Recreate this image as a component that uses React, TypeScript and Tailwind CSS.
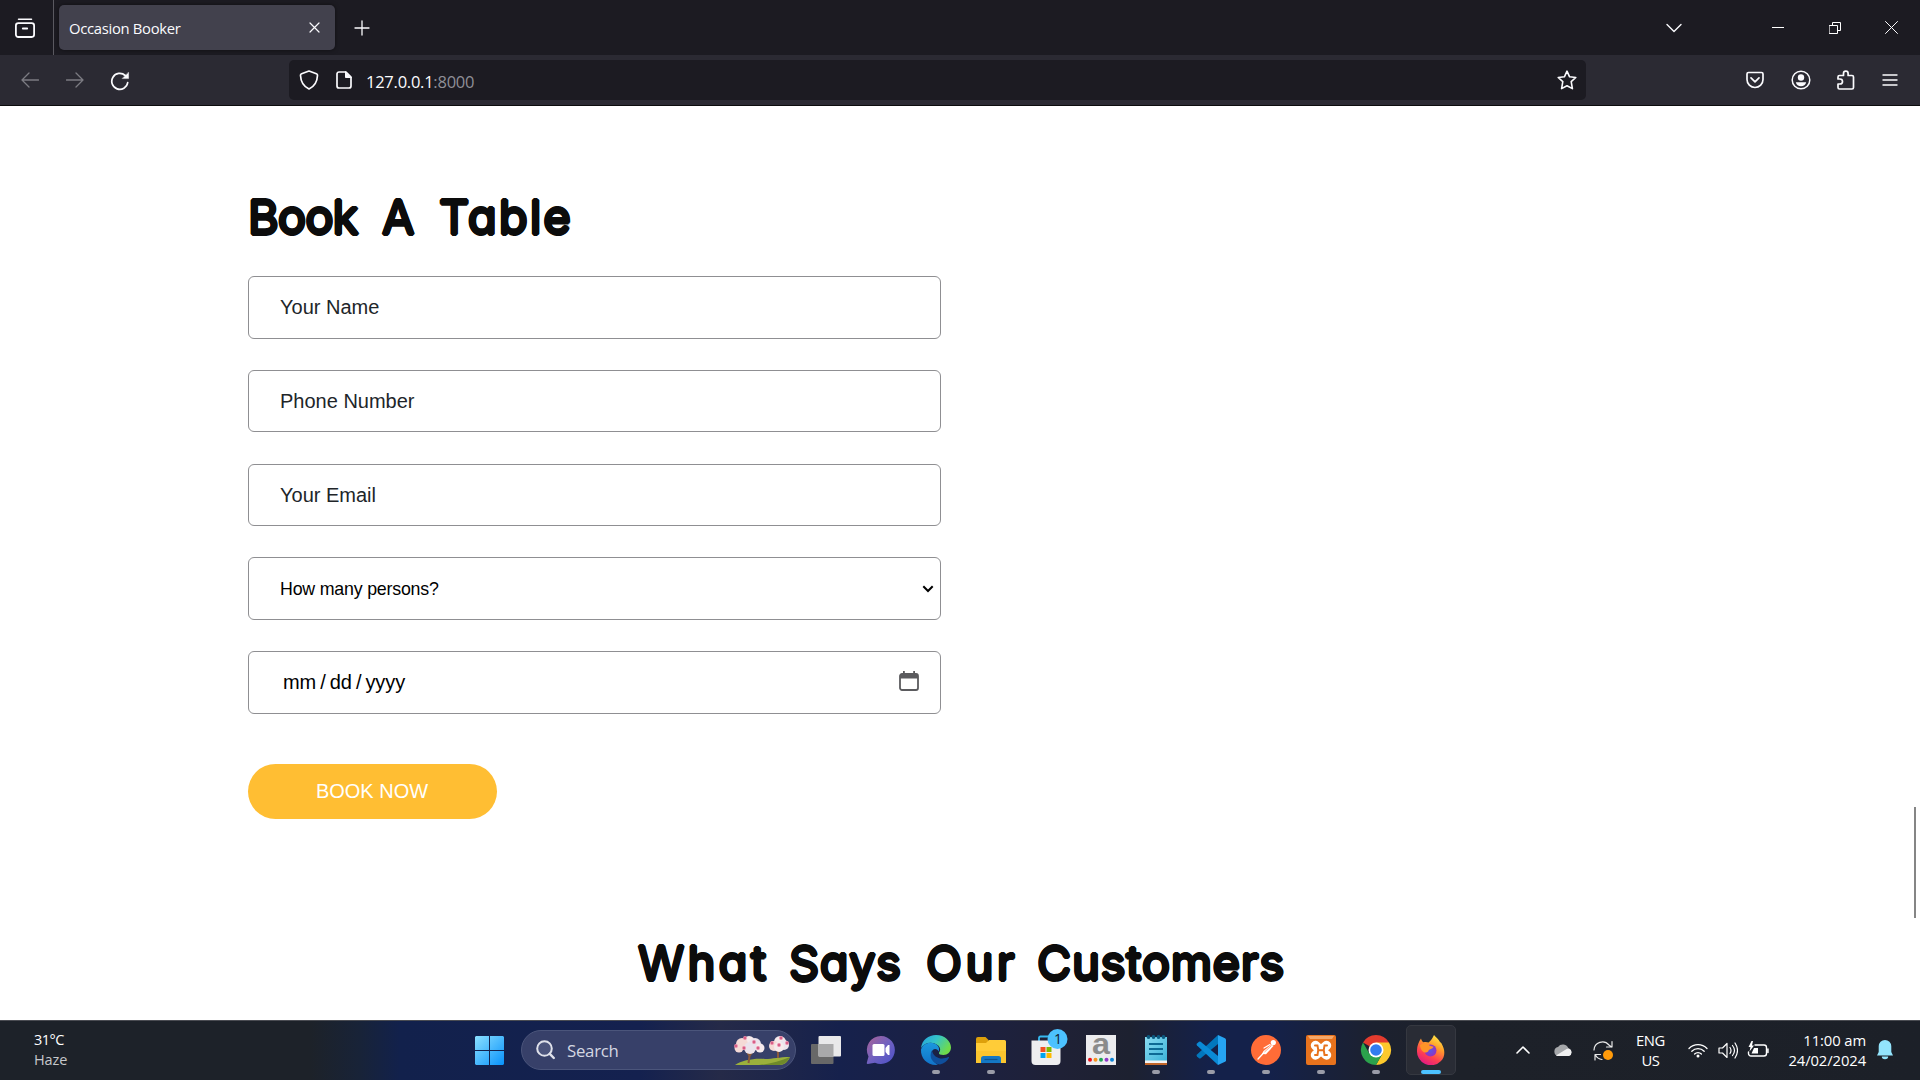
import type { ReactNode } from "react";

const UI = "font-['Open_Sans','Noto_Sans',sans-serif]";

function Icon({ w = 20, h = 20, vb, className = "", children }: { w?: number; h?: number; vb?: string; className?: string; children: ReactNode }) {
  return (
    <svg width={w} height={h} viewBox={vb ?? `0 0 ${w} ${h}`} className={`block shrink-0 ${className}`} fill="none" stroke="#fbfbfe" strokeWidth="1.5" strokeLinecap="round" strokeLinejoin="round">
      {children}
    </svg>
  );
}

function TabStrip() {
  return (
    <div className="flex h-[55px] items-center bg-[#1c1b22]">
      <div className="flex h-full w-[54px] items-center border-r border-[#5a5960] pl-[15px]">
        <Icon w={20} h={20}>
          <path d="M3.5 1.2h13" />
          <rect x="0.9" y="5.2" width="18.2" height="13.8" rx="2.4" strokeWidth="1.8" />
          <path d="M7.8 10.5h4.4" strokeWidth="1.8" />
        </Icon>
      </div>
      <div className="ml-[5px] flex h-[45px] w-[276px] items-center justify-between rounded-[5px] bg-[#42414d] pr-[15px] pl-[10px] shadow-[0_0_4px_rgba(0,0,0,0.5)]">
        <span className="pt-[2px] text-[14.8px] tracking-[-0.3px] text-[#fbfbfe]">Occasion Booker</span>
        <Icon w={11} h={11}><path d="M1 1l9 9M10 1l-9 9" strokeWidth="1.2" /></Icon>
      </div>
      <Icon w={16} h={16} className="ml-[18.5px]"><path d="M8 1v14M1 8h14" strokeWidth="1.3" /></Icon>
      <div className="flex-1" />
      <Icon w={16} h={10} className="mr-[90px]"><path d="M1 1.5l7 7 7-7" strokeWidth="1.4" /></Icon>
      <Icon w={12} h={12} className="mr-[45px]"><path d="M0 5.5h12" stroke="#fff" strokeWidth="1" strokeLinecap="butt" /></Icon>
      <Icon w={12} h={12} className="mr-[44px]"><path d="M.5 3.5h8v8h-8zM3.5 3.5v-3h8v8h-3" stroke="#fff" strokeWidth="1" strokeLinejoin="miter" /></Icon>
      <Icon w={13} h={13} className="mr-[22px]"><path d="M.5.5l12 12M12.5.5l-12 12" strokeWidth="1" /></Icon>
    </div>
  );
}

function Toolbar() {
  return (
    <div className="flex h-[51px] items-center border-b border-[#0c0c0d] bg-[#2b2a33]">
      <Icon w={18} h={16} className="ml-[21px]"><path d="M17.5 8H1M8 1L1 8l7 7" stroke="#7c7b82" strokeWidth="1.3" /></Icon>
      <Icon w={18} h={16} className="ml-[27px]"><path d="M.5 8H17M10 1l7 7-7 7" stroke="#7c7b82" strokeWidth="1.3" /></Icon>
      <Icon w={20} h={20} className="mt-px ml-[26px]">
        <path d="M17.7 11.5a8 8 0 1 1-2.500-7" strokeWidth="1.7" />
        <path d="M18.6 1.4v6.2h-6.2z" fill="#fbfbfe" strokeWidth="0.4" />
      </Icon>
      <div className="ml-[159px] flex h-10 w-[1297px] items-center rounded-[5px] bg-[#1c1b22] pr-[9px] pl-[10px]">
        <Icon w={20} h={20}><path d="M10 1l7.4 2.8c.9.4 1.2.8 1.1 1.7-.3 6.4-3.2 11-8.500 13.500C4.700 16.500 1.800 11.900 1.500 5.500c-.1-.9.200-1.300 1.100-1.700z" strokeWidth="1.7" /></Icon>
        <Icon w={16} h={18} className="ml-[17px]">
          <path d="M3 1h7l5 5v9a2 2 0 0 1-2 2H3a2 2 0 0 1-2-2V3a2 2 0 0 1 2-2z" strokeWidth="1.7" />
          <path d="M9.500 1v5.500H15z" fill="#fbfbfe" strokeWidth="1" />
        </Icon>
        <span className="ml-[14px] pt-[5px] text-[16.5px] tracking-[-0.25px] text-[#fbfbfe]">127.0.0.1<span className="text-[#8f8f97]">:8000</span></span>
        <div className="flex-1" />
        <Icon w={20} h={20}><path d="M10 1.200l2.600 5.600 6.200.7-4.600 4.200 1.200 6.900L10 15.700l-5.400 2.900 1.200-6.900L1.200 7.500l6.200-.7z" strokeWidth="1.6" /></Icon>
      </div>
      <div className="flex-1" />
      <Icon w={18} h={18} className="mr-[27px]"><path d="M2.500 1.500h13A1.500 1.500 0 0 1 17 3v5.500a8 8 0 0 1-16 0V3a1.500 1.500 0 0 1 1.500-1.500zM5 6.800l4 4 4-4" strokeWidth="1.7" /></Icon>
      <Icon w={20} h={20} className="mr-[26px]">
        <circle cx="10" cy="10" r="8.800" strokeWidth="1.5" />
        <circle cx="10" cy="7.500" r="3.200" fill="#fbfbfe" stroke="none" />
        <path d="M4.800 12.300h10.400c-.6 2.500-2.600 4-5.200 4s-4.600-1.500-5.200-4z" fill="#fbfbfe" stroke="none" />
      </Icon>
      <Icon w={18} h={20} className="mr-[27px]"><path d="M1 9V7q0-1.500 1.500-1.500h4V3.400a2.300 2.300 0 0 1 4.600 0v2.100H15q1.500 0 1.500 1.500v10.500q0 1.500-1.500 1.500H2.500Q1 19 1 17.500V14h2a2.400 2.400 0 0 0 0-5z" strokeWidth="1.7" /></Icon>
      <Icon w={16} h={14} className="mr-[22px] -mt-px"><path d="M1 2h14M1 7h14M1 12h14" strokeWidth="1.4" /></Icon>
    </div>
  );
}

const COMIC =
  "flex h-[64px] items-center whitespace-nowrap text-[47px] leading-[64px] font-normal text-[#0c0c0c] font-['Comic_Sans_MS','Inter',sans-serif] [font-feature-settings:'cv11'] [text-shadow:1.6px_0_#0c0c0c,-1.6px_0_#0c0c0c,0_1.6px_#0c0c0c,0_-1.6px_#0c0c0c,1.1px_1.1px_#0c0c0c,-1.1px_1.1px_#0c0c0c,1.1px_-1.1px_#0c0c0c,-1.1px_-1.1px_#0c0c0c]";

function Field({ children, className = "" }: { children: ReactNode; className?: string }) {
  return (
    <div className={`mb-[31.25px] flex h-[62.5px] w-[693px] items-center rounded-[6px] border border-[#8f8f92] pl-[31px] text-[20px] text-[#212529] ${className}`}>
      {children}
    </div>
  );
}

function Page() {
  return (
    <main className="flex h-[914px] justify-between overflow-hidden bg-white font-['Liberation_Sans',Arial,sans-serif]">
      <div className="w-[1912px] pl-[248px]">
        <h2 className={`mt-[79px] mb-[27px] ${COMIC}`}>
          <span className="w-[134px] tracking-[-0.8px]">Book</span>
          <span className="w-[57px]">A</span>
          <span className="tracking-[2.2px]">Table</span>
        </h2>
        <Field>Your Name</Field>
        <Field>Phone Number</Field>
        <Field>Your Email</Field>
        <Field className="justify-between pr-[6px] !text-[17.8px] tracking-[-0.2px] !text-black">
          <span className="pt-[2px]">How many persons?</span>
          <svg width="12" height="8" viewBox="0 0 12 8" fill="none" stroke="#000" strokeWidth="2"><path d="M1.300 1.300L6 6l4.700-4.700" /></svg>
        </Field>
        <Field className="justify-between pr-[21px] pl-[34px] !text-black">
          <span className="flex gap-[4px] tracking-[-0.05px]"><span>mm</span><span>/</span><span>dd</span><span>/</span><span>yyyy</span></span>
          <svg width="20" height="20" viewBox="0 0 20 20" className="-mt-[3px]">
            <rect x="1" y="3" width="18" height="16" rx="2" fill="none" stroke="#5b5b5e" strokeWidth="1.8" />
            <path d="M1 3h18v4.500H1zM4 0h1.800v4H4zM14.200 0H16v4h-1.800z" fill="#5b5b5e" />
          </svg>
        </Field>
        <button className="mt-[50px] block h-[55px] w-[249px] rounded-full bg-[#ffbe33] pr-px text-center text-[20px] text-white">BOOK NOW</button>
        <h2 className={`mt-[112px] ml-[390px] ${COMIC}`}>
          <span className="w-[151px] tracking-[3.3px]">What</span>
          <span className="w-[137px] tracking-[0.6px]">Says</span>
          <span className="w-[111px] tracking-[3.6px]">Our</span>
          <span className="tracking-[0.75px]">Customers</span>
        </h2>
      </div>
      <div className="mt-[701px] mr-[4px] h-[111px] w-[2px] bg-[#858585]" />
    </main>
  );
}

function TaskIcon({ children, dot = false }: { children: ReactNode; dot?: boolean }) {
  return (
    <div className="flex h-[59px] w-[55px] shrink-0 flex-col items-center pt-[14px]">
      <svg width="30" height="30" viewBox="0 0 30 30" className="block shrink-0 overflow-visible">{children}</svg>
      {dot && <div className="mt-[5px] h-[4px] w-[8px] rounded-full bg-[#9a9ca8]" />}
    </div>
  );
}

function Sakura() {
  const blobs = [[16, 8, 6], [9, 10, 6], [22, 10, 6], [27, 14, 4.5], [6, 14, 4.5], [17, 14, 6], [47, 8, 6], [41, 12, 5], [51, 11, 5], [46, 13, 5]];
  const flowers = [[12, 4], [21, 8], [3, 12], [11, 14], [25, 14], [48, 4], [39, 9], [46, 11], [54, 9]];
  return (
    <svg width="57" height="32" viewBox="0 0 57 32" className="block shrink-0">
      <path d="M2 31c7-5 20-7 30-6 8 0 14-2 25-2-2 5-6 8-10 8z" fill="#9bb03c" />
      <path d="M26 31c10-1 22-4 31-8-3 6-7 8-12 8z" fill="#6f8a2a" />
      <path d="M15.500 29l1-7L13 16M16.500 22l4-6M45 24v-6l-2-4M45 18l3-4" stroke="#8a5a3c" strokeWidth="2" fill="none" />
      {blobs.map(([x, y, r], i) => <circle key={i} cx={x} cy={y} r={r} fill={i % 3 === 0 ? "#f6eaec" : i % 3 === 1 ? "#f5dad6" : "#ebe3ec"} />)}
      {flowers.map(([x, y], i) => <g key={i}><circle cx={x} cy={y} r="1.900" fill="#ea86a5" /><circle cx={x} cy={y} r="0.800" fill="#c02f62" /></g>)}
    </svg>
  );
}

function Taskbar() {
  return (
    <footer className="flex h-[60px] items-start border-t border-[#4a4c52] bg-[linear-gradient(90deg,#1d2229_0px,#1d2229_310px,#182338_360px,#12214c_400px,#14214f_640px,#252a48_720px,#16214c_840px,#1c2142_960px,#1f2136_1060px,#1d2130_1130px,#14214a_1210px,#14214a_1270px,#1c2130_1370px,#1d2129_1460px,#1c2028_1920px)] text-white">
      <div className="flex h-[57px] w-[475px] shrink-0 flex-col justify-center pl-[34px] text-[14.5px] leading-[20px] tracking-[-0.5px]">
        <span>31°C</span>
        <span className="tracking-[-0.1px] text-[#c6c8cb]">Haze</span>
      </div>
      <svg width="29" height="29" viewBox="0 0 29 29" className="mt-[15px] block shrink-0">
        <defs><linearGradient id="winFull" gradientUnits="userSpaceOnUse" x1="0" y1="0" x2="29" y2="29"><stop stopColor="#8be0ff" /><stop offset="1" stopColor="#0892fb" /></linearGradient></defs>
        <path d="M1 0h13v14H0V1zM15 0h13l1 1v13H15zM0 15h14v14H1l-1-1zM15 15h14v13l-1 1H15z" fill="url(#winFull)" />
      </svg>
      <div className="mt-[9px] ml-[17px] flex h-[40px] w-[275px] shrink-0 items-center rounded-full border border-[#4b557b] bg-[#374069] pr-[5px] pl-[14px]">
        <Icon w={19} h={20}><circle cx="8.500" cy="8.500" r="7.300" stroke="#dfe1ea" strokeWidth="2" fill="#4b547c" /><path d="M13.800 13.800l4 4.200" stroke="#dfe1ea" strokeWidth="2.4" /></Icon>
        <span className="ml-[12px] pt-[2px] text-[16.8px] tracking-[-0.25px] text-[#d4d7e2]">Search</span>
        <div className="flex-1" />
        <Sakura />
      </div>
      <div className="ml-[2px] flex">
        <TaskIcon>
          <rect x="0" y="9" width="22.500" height="20" rx="1" fill="#686868" />
          <rect x="7.500" y="1" width="22.500" height="20.500" rx="1" fill="#e9e9ea" />
          <path d="M7.500 9h15v12.500h-15z" fill="#a9a9aa" />
        </TaskIcon>
        <TaskIcon>
          <defs><linearGradient id="chat" x1="0" y1="0" x2="1" y2="1"><stop stopColor="#ab6295" /><stop offset=".5" stopColor="#7061c0" /><stop offset="1" stopColor="#4a50c8" /></linearGradient></defs>
          <path d="M15 1a14 14 0 1 1-6 26.700L1.800 29c-.9.1-1.200-.5-1-1.200l1.700-6.200A14 14 0 0 1 15 1z" fill="url(#chat)" />
          <rect x="6.500" y="9" width="12" height="12" rx="1.500" fill="#fff" /><path d="M19.500 13l2.500-3h1.500v10H22l-2.500-3z" fill="#fff" />
        </TaskIcon>
        <TaskIcon dot>
          <defs>
            <linearGradient id="eg" x1="0" y1="0" x2="1" y2=".5"><stop stopColor="#239fe0" /><stop offset=".5" stopColor="#35c4c8" /><stop offset="1" stopColor="#6fdb4a" /></linearGradient>
            <linearGradient id="eb" x1="0" y1="0" x2="0" y2="1"><stop stopColor="#1b98dd" /><stop offset="1" stopColor="#1173c9" /></linearGradient>
          </defs>
          <path d="M0 13C1 5 7.500 0 15 0c9 0 15 6.500 15 12.500 0 4.500-3.500 7.500-7.500 7.500-3 0-5-1-4.500-2.300 1.800-2.200 1.500-5-.5-7C12 6 4 7 0 13z" fill="url(#eg)" />
          <path d="M0 14.500C2 9 7 7 11.500 8c5.500 1 7.500 5 6.300 8.500-1-2.500-4-3.500-6-1.500C8 19 10.500 26 17 29.800 7 31-.5 24 0 14.500z" fill="url(#eb)" />
          <path d="M11 15.500C7 22 12 29 19 29.500c4-1 7.500-3.500 9-6.800.3-.6-.2-.9-.8-.6-7.200 3.500-14.700.4-16.200-6.600z" fill="#0f4f9c" />
        </TaskIcon>
        <TaskIcon dot>
          <path d="M0 4q0-2 2-2h7.500l3 3v4H0z" fill="#dda00b" />
          <path d="M0 8h10l3-3h15.500Q30 5 30 6.500V28H0z" fill="#ffcc38" /><path d="M0 16h30v12H0z" fill="#f8bf26" opacity=".55" />
          <path d="M5 28v-4.500Q5 21 7.500 21h15q2.500 0 2.500 2.500V28z" fill="#1478c5" /><path d="M8.500 24.500h13" stroke="#0d5591" strokeWidth="1.2" />
        </TaskIcon>
        <TaskIcon>
          <path d="M8 7V3q0-1.500 1.500-1.500H18" stroke="#35b8ef" strokeWidth="1.8" fill="none" />
          <path d="M.5 5.500h29V26q0 4-4 4h-21q-4 0-4-4z" fill="#eeeef0" />
          <path d="M9.500 12h5v5h-5z" fill="#f25022" /><path d="M15.500 12h5v5h-5z" fill="#7fba00" /><path d="M9.500 18h5v5h-5z" fill="#00a4ef" /><path d="M15.500 18h5v5h-5z" fill="#ffb900" />
          <circle cx="26.500" cy="4" r="10" fill="#4cc2ff" /><text x="23" y="9" fontSize="14" fill="#10202c" className={UI}>1</text>
        </TaskIcon>
        <TaskIcon>
          <path d="M0 0h30v30H0z" fill="#ececee" />
          <text x="6" y="19" fontSize="30" fontWeight="700" fill="#8b8b8b" textLength="18" lengthAdjust="spacingAndGlyphs" className="font-['Liberation_Sans',sans-serif]">a</text>
          <circle cx="4" cy="24.700" r="2" fill="#f01018" /><circle cx="9.500" cy="24.700" r="2" fill="#f7931e" /><circle cx="15" cy="24.700" r="2" fill="#1fa557" /><circle cx="20.500" cy="24.700" r="2" fill="#9038c8" /><circle cx="26" cy="24.700" r="2" fill="#0b84d8" />
        </TaskIcon>
        <TaskIcon dot>
          <defs><linearGradient id="np" x1="0" y1="0" x2="1" y2="1"><stop stopColor="#8bdcf2" /><stop offset="1" stopColor="#3bb4d8" /></linearGradient></defs>
          <path d="M4 2h22v24H4z" fill="url(#np)" /><path d="M4 25.500h22V28H4z" fill="#f3f3f3" /><path d="M4 28h22v2H4z" fill="#c2662a" />
          <path d="M8 9h14M8 14h14M8 19h14" stroke="#0d6a94" strokeWidth="1.8" />
          <g fill="#0c5a80"><circle cx="7.500" cy="2" r="1.900" /><circle cx="12.500" cy="2" r="1.900" /><circle cx="17.500" cy="2" r="1.900" /><circle cx="22.500" cy="2" r="1.900" /></g>
        </TaskIcon>
        <TaskIcon dot>
          <path d="M22 0L1 19.500q-1 1 0 2l2 1.800q.8.6 1.700 0L22 9z" fill="#0277bd" />
          <path d="M22 30L1 10.500q-1-1 0-2l2-1.800q.8-.6 1.700 0L22 21z" fill="#0a8ad6" />
          <path d="M22 0l7 3.200q1 .5 1 1.500v20.600q0 1-1 1.500L22 30z" fill="#26a4f2" />
        </TaskIcon>
        <TaskIcon dot>
          <circle cx="15" cy="15" r="15" fill="#ff6c37" />
          <circle cx="22.300" cy="7.600" r="2.600" fill="#fff" /><path d="M20.500 9.500l-8 6.500-1.500 3 4 .3L22.500 11z" fill="#fff" /><path d="M7 24l6-6.500M13 13l6-3.500" stroke="#fff" strokeWidth="1.3" strokeLinecap="round" />
          <path d="M20.500 10.500l-7 6.500" stroke="#ff6c37" strokeWidth=".6" />
        </TaskIcon>
        <TaskIcon dot>
          <rect width="30" height="30" rx="2" fill="#e8731d" /><path d="M2 1h26l-2 3H4z" fill="#f4a86a" />
          <path d="M9.500 10.500l11 9.500M20.500 10.500l-11 9.500" stroke="#fff" strokeWidth="9.500" strokeLinecap="round" />
          <path d="M9 10.500h2.500q1.500 4.500 0 9.500H9M21 10.500h-2.500q-1.500 4.500 0 9.500H21M12.500 15.200h5" stroke="#e8731d" strokeWidth="2" fill="none" strokeLinecap="round" />
        </TaskIcon>
        <TaskIcon dot>
          <path d="M15 15L2 7.500A15 15 0 0 1 28 7.500z" fill="#e33b2e" />
          <path d="M15 7.500H28A15 15 0 0 1 15 30l6.500-11.500z" fill="#fdc92c" />
          <path d="M2 7.500A15 15 0 0 0 15 30l6.500-11.300L15 15l-6.500 3.700z" fill="#2ba24c" />
          <circle cx="15" cy="15" r="7.500" fill="#fff" /><circle cx="15" cy="15" r="5.800" fill="#317cf0" />
        </TaskIcon>
        <div className="mt-[4px] ml-[3px] flex h-[50px] w-[50px] shrink-0 flex-col items-center rounded-[5px] border border-[#353840] bg-[#292c35] pt-[9px]">
          <svg width="30" height="30" viewBox="0 0 30 30" className="block shrink-0">
            <defs><linearGradient id="ff" x1=".8" y1="0" x2=".3" y2="1"><stop stopColor="#fff04a" /><stop offset=".35" stopColor="#ffa02a" /><stop offset=".7" stopColor="#ff4050" /><stop offset="1" stopColor="#e01888" /></linearGradient>
            <radialGradient id="ffp"><stop stopColor="#5a55e8" /><stop offset="1" stopColor="#9333c0" /></radialGradient></defs>
            <path d="M5 3.500c.5 2 1.300 3 2.500 3.800 2-.5 3.500-.3 5 .2C15 6 16.500 3 18 0c2 2.500 4.500 4 6 7 .8.5 1.800 1.500 2 2.500 3 5 3.500 12-1 16.500A14 14 0 0 1 1 15c0-4 1.800-8.500 4-11.500z" fill="url(#ff)" />
            <circle cx="14.500" cy="15.500" r="6" fill="url(#ffp)" />
            <path d="M4 10c4-2.500 7-2 9.500.5 1.500.8 3.500.5 4 1.500-1 2-4 2-5 3.500 0 1.500-2 2-3.500 2C6 17 4 13 4 10z" fill="#ff9428" />
          </svg>
          <div className="mt-[5px] h-[4px] w-[20px] shrink-0 rounded-full bg-[#4cc2ff]" />
        </div>
      </div>
      <div className="flex-1" />
      <div className="flex h-[58px] shrink-0 items-center">
        <Icon w={14} h={8} className="mr-[23px]"><path d="M1 7l6-6 6 6" stroke="#fff" strokeWidth="1.6" /></Icon>
        <Icon w={20} h={14} className="mr-[20px]">
          <path d="M5 13a4.600 4.600 0 0 1 0-9 6 6 0 0 1 10.500 1.500A4 4 0 0 1 16 13z" fill="#a5a7aa" stroke="none" />
          <path d="M3 12.500L12 7a5 5 0 0 1 4-1.500 4 4 0 0 1 0 7.500H4z" fill="#f0f0f1" stroke="none" />
        </Icon>
        <Icon w={21} h={21} className="mr-[22px]">
          <path d="M1 10a8.500 8.500 0 0 1 15-5l2.500 2M19 1.500V7h-5.500M2 20v-5.500h5.500M2.500 15a8.500 8.500 0 0 0 6.500 4.500" stroke="#e8e8e8" strokeWidth="1.2" />
          <circle cx="15" cy="15" r="5" fill="#ff9a0a" stroke="none" />
        </Icon>
        <div className="mr-[23px] w-[29px] text-center text-[14.8px] leading-[20px] tracking-[-0.4px]">ENG<br />US</div>
        <Icon w={20} h={15} className="mr-[10px]"><path d="M1 5.500a12.500 12.500 0 0 1 18 0M3.800 8.300a8.700 8.700 0 0 1 12.400 0M6.600 11a4.800 4.800 0 0 1 6.800 0" stroke="#fff" strokeWidth="1.3" /><circle cx="10" cy="13" r="1.500" fill="#fff" stroke="none" /></Icon>
        <Icon w={20} h={17} className="mr-[9px]"><path d="M1 6h3.500L9 1.500v14L4.500 11H1zM12 5.500q2 3 0 6M14.500 3.500q4 5 0 10M17 1q5 7.500 0 15" stroke="#fff" strokeWidth="1.2" /></Icon>
        <Icon w={22} h={18} className="mr-[19px]">
          <path d="M8 4h9a2.500 2.500 0 0 1 2.500 2.500v6A2.500 2.500 0 0 1 17 15H4a2.500 2.500 0 0 1-2.500-2.500V11M21 8v3.500" stroke="#fff" strokeWidth="1.4" />
          <path d="M7 7h4v5.500H4.500z" fill="#fff" stroke="none" /><path d="M4.500 0L1.500 6h2l-1 4.500L7 4.500H5L6 0z" fill="#fff" stroke="none" />
        </Icon>
        <div className="mr-[11px] w-[78px] text-right text-[14.8px] leading-[20px] tracking-[-0.1px] whitespace-nowrap">11:00 am<br />24/02/2024</div>
        <Icon w={16} h={20} className="mr-[27px]"><path d="M8 0a6.300 6.300 0 0 0-6.300 6.300V12L0 15.500h16L14.300 12V6.300A6.300 6.300 0 0 0 8 0zM4.800 16.500a3.200 2.800 0 0 0 6.400 0z" fill="#93e4fc" stroke="none" /></Icon>
      </div>
    </footer>
  );
}

export default function App() {
  return (
    <div className={`flex h-[1080px] w-[1920px] flex-col overflow-hidden bg-white ${UI}`}>
      <TabStrip />
      <Toolbar />
      <Page />
      <Taskbar />
    </div>
  );
}
